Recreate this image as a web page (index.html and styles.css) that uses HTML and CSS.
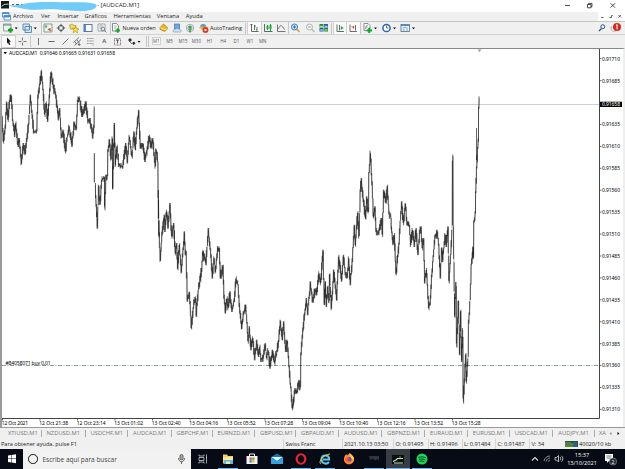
FILE: index.html
```html
<!DOCTYPE html>
<html lang="es">
<head>
    <meta charset="UTF-8">
    <meta name="viewport" content="width=device-width, initial-scale=1.0">
    <link rel="stylesheet" href="styles.css">
    <title>[AUDCAD,M1]</title>
</head>
<body>

<div class="screen">

    <header class="titlebar">
        <svg class="scribble" width="98" height="12" viewBox="0 0 98 12">
            <rect x="1" y="1" width="8" height="7.5" fill="#151b19"/>
            <path d="M1.500 6.500L4 4.500L8.500 4" stroke="#b9c4bd" fill="none"/>
            <path d="M12 4.500H14M16 4.500H19M21 4.500H24" stroke="#555" stroke-width="1"/>
            <path d="M8 4.500C14 7 22 4 30 2.800C42 1.300 62 2.500 80 2.300C90 2.300 97 3.500 96.500 6C96 9.500 88 11.700 76 11.100C62 10 54 9 43 9.500C34 10 28 10 22 8.500C16 7 10 7 8 4.500Z" fill="#70cbf8"/>
        </svg>
        <span class="title">- [AUDCAD,M1]</span>
        <svg class="window-buttons" width="62" height="12" viewBox="0 0 62 12" fill="none" stroke="#222" stroke-width=".8">
            <path d="M2 5.500H7M47.500 3.200L52 7.700M52 3.200L47.500 7.700"/>
            <path d="M24.500 4.500H28V7.800H24.500ZM25.500 4.500V3.400H29V6.700H28"/>
        </svg>
    </header>

    <nav class="menubar">
        <svg width="12" height="9" viewBox="0 0 12 9" fill="#fff" stroke="#4388c8" stroke-width=".9">
            <path d="M2.500 .8H9V5H2.500ZM4 3.500H10.500V8H4Z"/>
            <path d="M2.500 1.300H9M4 4.200H10.500" stroke-width="1.400"/>
        </svg>
        <span>Archivo</span>
        <span>Ver</span>
        <span>Insertar</span>
        <span>Gráficos</span>
        <span>Herramientas</span>
        <span>Ventana</span>
        <span>Ayuda</span>
        <svg class="child-buttons" width="27" height="9" viewBox="0 0 27 9" fill="none" stroke="#444" stroke-width=".8">
            <rect x="0" y="0" width="27" height="9" fill="#fff" stroke="none"/>
            <path d="M3 5.500H5.500M20.500 3L23 5.500M23 3L20.500 5.500"/>
            <path d="M11.500 5.500H13.500V3.500H14.500" stroke="#3d6b50" stroke-width="1"/>
        </svg>
    </nav>

    <div class="toolbar main-tools">
        <svg width="19" height="12" viewBox="0 0 19 12">
            <path d="M1.500 2H9V9H1.500Z" fill="#eef5ee" stroke="#77938a" stroke-width=".8"/>
            <path d="M1.500 3H9" stroke="#4f8c70"/>
            <path d="M6 8.200H11M8.500 5.700V10.700" stroke="#16a32b" stroke-width="2.200"/>
            <path d="M12.700 5.500H15.700L14.200 7.200Z"/>
        </svg>
        <svg width="19" height="12" viewBox="0 0 19 12">
            <path d="M2 2H8.500V8H2ZM4 4.500H10.500V10.500H4Z" fill="#d3e6f7" stroke="#5283ae" stroke-width=".9"/>
            <path d="M12.700 5.500H15.700L14.200 7.200Z"/>
        </svg>
        <svg class="sep" width="12" height="12" viewBox="0 0 12 12">
            <path d="M2 2H10V10H2Z" fill="#edf6ed" stroke="#708a80" stroke-width=".8"/>
            <path d="M4 3.500V6M3 4.500L4 3.500L5 4.500" stroke="#229b3b" fill="none"/>
            <path d="M6 7L9 9M8 6V9" stroke="#ce5439" stroke-width="1.200"/>
        </svg>
        <svg width="12" height="12" viewBox="0 0 12 12" fill="none" stroke="#46525b" stroke-width=".9">
            <circle cx="6" cy="6" r="2.700"/>
            <path d="M6 1.800V5M6 7V10.200M1.800 6H5M7 6H10.200"/>
        </svg>
        <svg width="12" height="12" viewBox="0 0 12 12" stroke="#a98719" stroke-width=".6">
            <path d="M1.500 3L4.500 2L5.500 3.500H8V7H2.500Z" fill="#f2d95c"/>
            <path d="M7.500 4.500L8.500 6.500L11 7L9 8.500L9.500 11L7.500 9.500L5 10.500L6 8.500L4.500 6.500H6.800Z" fill="#ffe33c"/>
        </svg>
        <svg width="12" height="12" viewBox="0 0 12 12">
            <rect x="2" y="2.500" width="8" height="7" fill="#fff" stroke="#4b6d9c" stroke-width=".9"/>
            <path d="M3 2.500V9.500" stroke="#3d74b8" stroke-width="1.600"/>
        </svg>
        <svg width="12" height="12" viewBox="0 0 12 12">
            <path d="M2 2H9V9H2Z" fill="#fff" stroke="#87919a" stroke-width=".8"/>
            <path d="M3 4H8M3 6H6M5 2V9" stroke="#95aaa0" stroke-width=".7"/>
            <circle cx="7" cy="7" r="1.800" fill="#dbe9f5" stroke="#666" stroke-width=".7"/>
            <path d="M8.500 8.500L10.500 10.500" stroke="#777"/>
        </svg>
        <span class="sep tool-label">
            <svg width="10" height="12" viewBox="0 0 10 12">
                <path d="M1.500 1.500H5.500L7.500 3.500V9H1.500Z" fill="#fff" stroke="#60766b" stroke-width=".8"/>
                <path d="M3 4H6M3 6H5" stroke="#777" stroke-width=".6"/>
                <path d="M4.500 8.500H9M6.700 6.200V10.800" stroke="#18a82e" stroke-width="1.900"/>
            </svg>
            Nueva orden
        </span>
        <svg width="12" height="12" viewBox="0 0 12 12">
            <path d="M2 5.500L5.500 2L10 6L7 9.500L2 7.500Z" fill="#edb72b" stroke="#a77814" stroke-width=".7"/>
            <path d="M2.500 5.800L7 7.800L9.500 6" fill="none" stroke="#fff1a8" stroke-width=".8"/>
        </svg>
        <svg width="12" height="12" viewBox="0 0 12 12">
            <rect x="3.500" y="2" width="5" height="5" fill="#67a9e1" stroke="#3977ad" stroke-width=".7"/>
            <path d="M2 9.500C2 7 4 7.500 5 7C7 6 8 7 8.500 7.500C11 7.500 10.500 10 9.500 10H2.500Z" fill="#d4e3f1" stroke="#7c9db9" stroke-width=".7"/>
        </svg>
        <svg width="12" height="12" viewBox="0 0 12 12" fill="none">
            <circle cx="6" cy="6" r="3.700" stroke="#a5afb2"/>
            <circle cx="6" cy="6" r="2" stroke="#8b9898"/>
            <path d="M6 5.500V10.500" stroke="#20a33a" stroke-width="1.500"/>
            <circle cx="6" cy="5" r="1.300" fill="#35a850"/>
        </svg>
        <span class="tool-label auto">
            <svg width="13" height="12" viewBox="0 0 13 12">
                <path d="M2 5.500L6 3L11 5.500L7 9Z" fill="#e5b536"/>
                <path d="M3 4.500C3 1 9 1 9.500 4.500Z" fill="#5796cb"/>
                <circle cx="8.500" cy="8" r="3" fill="#d93823"/>
                <rect x="7.500" y="7" width="2" height="2" fill="#fff"/>
            </svg>
            AutoTrading
        </span>
        <i class="grip"></i>
        <svg class="pressed" width="13" height="12" viewBox="0 0 13 12" fill="none" stroke="#476354" stroke-width=".9">
            <path d="M3.500 2V9.500H10.500M2.500 3L3.500 2L4.500 3M6.500 3V8M6.500 4H8M9 5V8.500M8 8H9"/>
        </svg>
        <svg width="13" height="12" viewBox="0 0 13 12" fill="none" stroke="#465d50" stroke-width=".9">
            <path d="M2.500 2V9.500H10.500"/>
            <path d="M5.500 3V8M8.500 2V9" stroke="#138934"/>
            <path d="M5.500 4V7M8.500 3V7" stroke="#1ba63d" stroke-width="2"/>
        </svg>
        <svg width="13" height="12" viewBox="0 0 13 12" fill="none" stroke="#60696a" stroke-width=".9">
            <path d="M2.500 2.500V9.500H10.500M3.500 7C5 2 7 3 9.500 7.500"/>
        </svg>
        <svg class="sep" width="13" height="12" viewBox="0 0 13 12">
            <path d="M7.500 7L10.500 10" stroke="#d5a928" stroke-width="1.700"/>
            <circle cx="5.500" cy="5" r="3" fill="#d6eaff" stroke="#3978bd"/>
            <path d="M4 5H7M5.500 3.500V6.500" stroke="#2869ab"/>
        </svg>
        <svg width="13" height="12" viewBox="0 0 13 12">
            <path d="M7.500 7L10.500 10" stroke="#bdb9aa" stroke-width="1.500"/>
            <circle cx="5.500" cy="5" r="3" fill="#f1f1f1" stroke="#b1b5ba"/>
            <path d="M4 5H7" stroke="#a3a7ab"/>
        </svg>
        <svg width="13" height="12" viewBox="0 0 13 12">
            <path d="M2.500 2H6.500V5.500H2.500ZM7 6H11V9.500H7Z" fill="#238b33"/>
            <path d="M7 2H11V5.500H7ZM2.500 6H6.500V9.500H2.500Z" fill="#2b5cb0"/>
            <path d="M3 4.300H6M7.500 4.300H10.500M3 8H6M7.500 8H10.500" stroke="#cce7d9"/>
        </svg>
        <i class="grip"></i>
        <svg class="pressed" width="13" height="12" viewBox="0 0 13 12" fill="none" stroke="#476354" stroke-width=".9">
            <path d="M3 2.500V9.500H10M5.500 3V8.500"/>
            <path d="M7 4.500L9.500 6L7 7.500Z" fill="#27a445" stroke="#27a445" stroke-width=".4"/>
        </svg>
        <svg class="pressed" width="13" height="12" viewBox="0 0 13 12" fill="none" stroke="#665b5b" stroke-width=".9">
            <path d="M3 2.500V9.500H10M8.500 3V8.500"/>
            <path d="M4.500 5H7.500M6.500 4V6.500" stroke="#bd4747"/>
        </svg>
        <svg class="sep" width="19" height="12" viewBox="0 0 19 12">
            <path d="M3 1.500H7L9 3.500V8.500H3Z" fill="#fff" stroke="#6d7771" stroke-width=".8"/>
            <path d="M4.500 7C5.500 3 5 4 7 3M4.500 5H6.500" fill="none" stroke="#555" stroke-width=".6"/>
            <path d="M5.500 8.500H11M8.200 5.800V11" stroke="#17a72c" stroke-width="2"/>
            <path d="M13 5.500H16L14.500 7.200Z"/>
        </svg>
        <svg width="19" height="12" viewBox="0 0 19 12">
            <circle cx="6.500" cy="6" r="3.600" fill="#fff" stroke="#2766ad" stroke-width="1.500"/>
            <path d="M6.500 3.500V6H8.500" fill="none" stroke="#444" stroke-width=".7"/>
            <path d="M13 5.500H16L14.500 7.200Z"/>
        </svg>
        <svg width="19" height="12" viewBox="0 0 19 12">
            <rect x="2" y="2.500" width="8.500" height="7" fill="#e9f3fa" stroke="#466f91" stroke-width=".8"/>
            <path d="M2 3.500H10.500" stroke="#4788bd"/>
            <path d="M3.500 6H5L6 5L7 6H9M3.500 8H6M7 8H9" stroke="#668c85" stroke-width=".7" fill="none"/>
            <path d="M13 5.500H16L14.500 7.200Z"/>
        </svg>
        <svg class="tool-right" width="28" height="12" viewBox="0 0 28 12">
            <path d="M4.500 6.500L2 9" stroke="#334e75" stroke-width="1.300"/>
            <circle cx="5.800" cy="4.700" r="2" fill="#dce8f5" stroke="#38598b" stroke-width="1"/>
            <path d="M14 6C14 9 16 10 19 9V5H14Z" fill="#eee" stroke="#aaa" stroke-width=".8"/>
            <circle cx="20" cy="5" r="4" fill="#cf2e1e"/>
            <path d="M20.100 2.500V7.500M19 3.500L20.100 2.700" stroke="#fff" stroke-width="1" fill="none"/>
        </svg>
    </div>

    <div class="toolbar draw-tools">
        <svg class="pressed" width="13" height="11" viewBox="0 0 13 11">
            <path d="M5 1.500L9 5.700H7.200L8.300 8.500L7 9L6 6.500L5 7.500Z" fill="#111"/>
        </svg>
        <svg width="13" height="11" viewBox="0 0 13 11" stroke="#555" stroke-width=".8">
            <path d="M6.500 1.500V4.500M6.500 6.500V9.500M2.500 5.500H5.500M7.500 5.500H10.500"/>
        </svg>
        <svg class="sep" width="13" height="11" viewBox="0 0 13 11" stroke="#555" stroke-width=".8">
            <path d="M7.500 2V9"/>
        </svg>
        <svg width="13" height="11" viewBox="0 0 13 11" stroke="#444" stroke-width=".8">
            <path d="M3.500 5.500H9.500"/>
        </svg>
        <svg width="13" height="11" viewBox="0 0 13 11" stroke="#555" stroke-width=".8">
            <path d="M3.500 8.500L9.500 2.500"/>
        </svg>
        <svg width="13" height="11" viewBox="0 0 13 11" stroke="#555" stroke-width=".8">
            <path d="M2.500 6.500L8 1.500M3.500 9.500L10 3.500M4 6L5.500 8M6 4L8 6.500M7 8.500H9.500M8 6.500V10"/>
        </svg>
        <svg width="13" height="11" viewBox="0 0 13 11" stroke="#777" stroke-width=".8" stroke-dasharray="1 .4">
            <path d="M3 2.500H10M3 5H10M3 7.500H8M9 7V9.500"/>
        </svg>
        <b class="letter">A</b>
        <svg width="13" height="11" viewBox="0 0 13 11" fill="none" stroke="#666" stroke-width=".8">
            <rect x="3.500" y="2.500" width="6" height="6.500" stroke-dasharray="1 .5"/>
            <path d="M5 4H8M6.500 4V7.500" stroke="#333"/>
        </svg>
        <svg width="20" height="11" viewBox="0 0 20 11">
            <path d="M3 4L5 2L7 4L5 6ZM7 7L9 5.500L10.500 7.500L8.500 9Z" fill="#333"/>
            <path d="M4 5L7 8" stroke="#555" stroke-width=".8"/>
            <path d="M12.500 5H15.500L14 6.700Z"/>
        </svg>
        <i class="grip"></i>
        <span class="pressed">M1</span>
        <span>M5</span>
        <span>M15</span>
        <span>M30</span>
        <span>H1</span>
        <span>H4</span>
        <span>D1</span>
        <span>W1</span>
        <span>MN</span>
        <i class="sep"></i>
    </div>

    <main class="chart">
        <svg id="chart" width="621" height="378" viewBox="2 49 621 378">
            <path d="M2 104.500H599" stroke="#c3c3c3" stroke-width=".8"/>
            <path d="M2 365.500H599" stroke="#5d8878" stroke-width=".8" stroke-dasharray="4 1.500 1 1.500"/>
            <path d="M477.500 49.500H481.500L479.500 52Z" fill="#999"/>
            <path d="M599.500 49V418.500H2" fill="none" stroke="#444" stroke-width="1"/>
            <path id="trace" fill="none" stroke="#666" stroke-width=".45"/>
            <path id="bars" fill="none" stroke="#000" stroke-width=".6"/>
            <path d="M3.500 52H7L5.200 54.300Z"/>
            <text x="9" y="55.300" textLength="106" xml:space="preserve">AUDCAD,M1  0.91646 0.91665 0.91631 0.91658</text>
            <text x="5.500" y="364.800" textLength="45">#84058071 buy 0.01</text>
            <g id="prices"></g>
            <g id="times"></g>
            <rect x="600" y="101.700" width="22" height="5.300"/>
            <text x="602" y="106.300" textLength="18" fill="#fff">0.91658</text>
        </svg>
    </main>

    <div class="tabs">
        <span>XTIUSD,M1</span>
        <span>NZDUSD,M1</span>
        <span>USDCHF,M1</span>
        <span>AUDCAD,M1</span>
        <span>GBPCHF,M1</span>
        <span>EURNZD,M1</span>
        <span>GBPUSD,M1</span>
        <span>GBPAUD,M1</span>
        <span>AUDUSD,M1</span>
        <span>GBPNZD,M1</span>
        <span>EURAUD,M1</span>
        <span>EURUSD,M1</span>
        <span>USDCAD,M1</span>
        <span>AUDJPY,M1</span>
        <span>XA</span>
        <svg width="16" height="8" viewBox="0 0 16 8">
            <path d="M2.500 2L.5 3.500L2.500 5Z" fill="#888"/>
            <path d="M8.500 2L10.500 3.500L8.500 5Z"/>
        </svg>
    </div>

    <footer class="status">
        <span>Para obtener ayuda, pulse F1</span>
        <span>Swiss Franc</span>
        <span>2021.10.13 03:50</span>
        <span>O: 0.91495</span>
        <span>H: 0.91496</span>
        <span>L: 0.91484</span>
        <span>C: 0.91487</span>
        <span>V: 34</span>
        <span class="traffic">
            <svg width="13" height="7" viewBox="0 0 13 7">
                <rect width="13" height="6" fill="#254e48"/>
                <path d="M1 1V6M3 1V6M5 1V6M7 2V6" stroke="#8cb33b"/>
                <path d="M9 1V6M11 1V6" stroke="#2d83a9"/>
            </svg>
            40020/10 kb
        </span>
    </footer>

    <div class="taskbar">
        <svg class="start" width="23" height="20" viewBox="0 0 23 20">
            <path d="M8 6.500L11.300 6V9.500H8ZM11.800 5.900L16 5.300V9.500H11.800ZM8 10H11.300V13.500L8 13ZM11.800 10H16V14.200L11.800 13.600Z" fill="#fff"/>
        </svg>
        <div class="search">
            <i class="cortana"></i>
            <span>Escribe aquí para buscar</span>
            <svg width="9" height="12" viewBox="0 0 9 12" fill="none" stroke="#444" stroke-width=".8">
                <rect x="3" y="1.500" width="3" height="5.500" rx="1.500" fill="#aaa"/>
                <path d="M1.500 5C1.500 10 7.500 10 7.500 5M4.500 8.800V11"/>
            </svg>
        </div>
        <svg width="24" height="20" viewBox="0 0 24 20" fill="none" stroke="#ccc" stroke-width=".8">
            <path d="M8 5.500V7H13V5.500M8 14.500V13H13V14.500M8 8.500H13V11.500H8ZM15.500 5.500V14.500M15 8.500H16"/>
        </svg>
        <div class="app open">
            <svg width="14" height="14" viewBox="0 0 14 14">
                <path d="M2 2.500H6L7 4H12V11.500H2Z" fill="#f4ce62"/>
                <path d="M3 6.500H12V12H3Z" fill="#66b9e5"/>
                <path d="M2 5H12V8H2Z" fill="#fae69d"/>
                <path d="M5 9.500H9V12H5Z" fill="#f7e6ac"/>
            </svg>
        </div>
        <div class="app">
            <svg width="14" height="14" viewBox="0 0 14 14">
                <path d="M4.500 4V2H9.500V4" fill="none" stroke="#eee"/>
                <path d="M1.500 4H12.500V12H1.500Z" fill="#f4f4f4"/>
                <path d="M4.500 5.500H6.800V7.800H4.500Z" fill="#dd4b35"/>
                <path d="M7.200 5.500H9.500V7.800H7.200Z" fill="#55a946"/>
                <path d="M4.500 8.200H6.800V10.500H4.500Z" fill="#318bd0"/>
                <path d="M7.200 8.200H9.500V10.500H7.200Z" fill="#ebb42e"/>
            </svg>
        </div>
        <div class="app">
            <svg width="14" height="14" viewBox="0 0 14 14">
                <path d="M1 5L7 1.500L13 5V12H1Z" fill="#1475ba"/>
                <path d="M1.500 5H12.500L7 9Z" fill="#e8f5fc"/>
                <path d="M1 5.500L7 9.500L13 5.500V12H1Z" fill="#39a0df"/>
            </svg>
        </div>
        <div class="app open">
            <svg width="14" height="14" viewBox="0 0 14 14">
                <ellipse cx="7" cy="7" rx="4.300" ry="4.700" fill="none" stroke="#ed2437" stroke-width="2.300"/>
                <ellipse cx="7" cy="7" rx="2.100" ry="4" fill="#080c15"/>
            </svg>
        </div>
        <div class="app open">
            <svg width="14" height="14" viewBox="0 0 14 14" fill="none">
                <path d="M11 10C8.500 13 3.500 11.500 3.500 7.500C3.500 2.500 11 2 11.200 7.500H5" stroke="#5cc5ef" stroke-width="2"/>
                <path d="M3 12C0 11 4 3 12 2" stroke="#f4c83e" stroke-width="1"/>
            </svg>
        </div>
        <div class="app">
            <svg width="14" height="14" viewBox="0 0 14 14">
                <circle cx="7" cy="7.500" r="5" fill="#f45c30"/>
                <path d="M2 7C2 4 4 3 4 2L5.500 4L7.500 1C10 3 13 5 11.800 9C9 13 4 13 2 8Z" fill="#ff9232"/>
                <path d="M7.500 1C9 3 13 5 11.500 8L9 6Z" fill="#ffd544"/>
                <circle cx="7" cy="7.500" r="2.500" fill="#7248b8"/>
                <path d="M3 5.500L7 6L5.500 8L8.500 9.500C5 12 3 9 3 6Z" fill="#f5622b"/>
            </svg>
        </div>
        <div class="app open">
            <svg width="14" height="14" viewBox="0 0 14 14">
                <path d="M2 4H12V9L10.500 7L8 8.500L6 6.500L3 8Z" fill="#2e373e"/>
            </svg>
        </div>
        <div class="app open active">
            <svg width="14" height="14" viewBox="0 0 14 14">
                <rect x="1" y="3" width="12" height="9" fill="#07120d"/>
                <path d="M2 9.500L5 8L6.500 6.500H12M3 11H12" stroke="#d5e0cd" stroke-width="1.100" fill="none"/>
                <path d="M8 5H10" stroke="#58a94e"/>
            </svg>
        </div>
        <div class="app open">
            <svg width="14" height="14" viewBox="0 0 14 14" fill="none" stroke="#0b311b" stroke-linecap="round">
                <circle cx="7" cy="7" r="5.500" fill="#1ed760" stroke="none"/>
                <path d="M3.800 5.300C6.500 4.500 8.500 4.800 10.500 5.800M4.200 7.300C6.500 6.700 8 7 9.800 7.800M4.600 9.200C6.500 8.800 7.500 9 9 9.700" stroke-width=".9"/>
            </svg>
        </div>
        <svg class="tray" width="36" height="20" viewBox="0 0 36 20" fill="none" stroke="#ddd" stroke-width=".8">
            <path d="M2 11.500L5 8.500L8 11.500" stroke-width="1.100"/>
            <path d="M14 12C14.500 9 17 7 20 7M16 12.500C16.500 10.500 18 9 20 9M18 12.500L20 11" stroke="#aaa"/>
            <path d="M25 8.500H26.500L28.500 6.500V13L26.500 11H25ZM30 8C31 9 31 10.500 30 11.500M31.500 6.800C33.300 8.500 33.300 11 31.500 12.800"/>
        </svg>
        <div class="clock">
            <span>15:37</span>
            <span>13/10/2021</span>
        </div>
        <svg class="notices" width="20" height="20" viewBox="0 0 20 20">
            <path d="M4 5H12V12H8L6 14V12H4Z" fill="#fff"/>
            <path d="M5.500 7H10.500M5.500 9H10" stroke="#333" stroke-width=".7"/>
            <circle cx="12" cy="12.500" r="3.600" fill="#222933" stroke="#aaa" stroke-width=".6"/>
            <text x="10.600" y="14.500" class="badge">2</text>
        </svg>
    </div>

</div>

<script src="chart.js"></script>
</body>
</html>
```
FILE: styles.css
```css
body {
    margin: 0;
    padding: 0;
    overflow: hidden;
    font-family: "Open Sans", "Noto Sans", sans-serif;
    background-color: #f0f0f0;
    color: #222;
}

svg {
    display: block;
    flex: none;
}

.screen {
    display: flex;
    flex-direction: column;
    width: 625px;
    height: 469px;
}

/* title and menu */

.titlebar {
    display: flex;
    height: 12px;
    background-color: #fff;
    font-size: 6px;
    line-height: 11px;
}

.title {
    margin-left: -1px;
    white-space: nowrap;
}

.window-buttons {
    margin-left: auto;
}

.menubar {
    display: grid;
    grid-template-columns: 13px 28px 16.500px 27px 29px 43.300px 29px 30px 1fr;
    height: 9px;
    border-bottom: 1px solid #c6c6c6;
    font-size: 5.800px;
    line-height: 8.500px;
}

.child-buttons {
    justify-self: end;
}

/* toolbars */

.toolbar {
    display: grid;
    align-items: center;
    justify-items: center;
    box-sizing: border-box;
}

.main-tools {
    grid-template-columns: 18.500px 20.500px 13.300px 13.300px 13.300px 13.300px 15.300px 48.500px 13px 13px 13px 48px 3px 13.500px 13.500px 13.500px 15px 13.500px 14px 3px 13.300px 13.300px 19px 19px 19px 1fr;
    height: 12px;
    padding-left: 2px;
}

.draw-tools {
    grid-template-columns: 13.500px 13.500px 16px 13.500px 13px 12.500px 13.500px 13.500px 13px 22px 3.500px 13.400px 13.400px 13.400px 13.400px 13.400px 13.400px 13.400px 13.400px 12px 1px;
    height: 14px;
    padding-left: 2px;
    padding-bottom: 1px;
    border-top: 1px solid #d2d2d2;
    font-size: 4.500px;
    color: #555;
}

.sep {
    box-shadow: -1px 0 0 #c8c8c8;
}

i.sep {
    height: 11px;
}

.pressed {
    background-color: #fafafa;
    outline: .5px solid #d0d0d0;
}

.grip {
    width: 1px;
    height: 11px;
    border-left: 1px solid #c4c4c4;
    border-right: 1px solid #c4c4c4;
}

.tool-label {
    display: flex;
    align-items: center;
    justify-self: start;
    font-size: 5.500px;
    white-space: nowrap;
    gap: 1px;
    margin-left: 2px;
}

.tool-label.auto {
    font-size: 5.600px;
    gap: 0;
    margin-left: 0;
}

.tool-right {
    justify-self: end;
}

.letter {
    font-size: 6px;
    font-weight: 600;
}

/* chart */

.chart {
    height: 378px;
    border-top: 1px solid #888;
    border-left: 2px solid #999;
    border-right: 2px solid #eee;
    background-color: #fff;
}

.chart text {
    font-family: "Noto Sans", sans-serif;
    font-size: 5px;
}

/* chart tabs */

.tabs {
    display: grid;
    grid-template-columns: 41.500px 44px 42.500px 43.500px 41px 42.500px 41px 43px 43px 43px 42.700px 42px 43.600px 41.700px 14px 16px;
    align-items: center;
    height: 12px;
    border-top: 1px solid #999;
    box-sizing: border-box;
    font-size: 5.800px;
    line-height: 7px;
    color: #777;
}

.tabs span {
    padding-left: 5px;
    border-right: 1px solid #aaa;
    white-space: nowrap;
}

.tabs span:first-child {
    padding-left: 8px;
}

.tabs span:nth-child(15) {
    padding-left: 4px;
    border: none;
}

/* status bar */

.status {
    display: grid;
    grid-template-columns: 284px 58.500px 51.500px 34.500px 34px 33.500px 34px 33px 1fr;
    height: 10px;
    font-size: 5.600px;
    line-height: 10.500px;
}

.status span {
    padding-left: 1.500px;
    box-shadow: -1px 0 0 #d4d4d4;
    white-space: nowrap;
}

.status span:first-child {
    padding-left: 1px;
}

.status .traffic {
    display: flex;
    align-items: center;
    gap: 1.500px;
    box-shadow: none;
}

/* taskbar */

.taskbar {
    display: flex;
    height: 20px;
    background-color: #070b15;
    color: #fff;
}

.search {
    display: flex;
    align-items: center;
    box-sizing: border-box;
    width: 168px;
    padding: 0 5px;
    background-color: #f2f2f2;
    color: #444;
    font-size: 6.500px;
}

.search svg {
    margin-left: auto;
}

.cortana {
    width: 7.500px;
    height: 7.500px;
    margin-right: 5px;
    border: 1.500px solid #111;
    border-radius: 50%;
}

.app {
    display: flex;
    align-items: center;
    justify-content: center;
    box-sizing: border-box;
    width: 24.250px;
    padding: 0 2px;
}

.start + .search + svg + .app {
    margin-left: 1px;
}

.open {
    background: linear-gradient(#69b5ec, #69b5ec) center bottom / 20px 1.200px no-repeat;
}

.active {
    background-color: #383d45;
    background-size: 100% 1.200px;
}

.tray {
    margin-left: auto;
}

.clock {
    display: flex;
    flex-direction: column;
    justify-content: center;
    width: 32px;
    font-size: 5.600px;
    line-height: 8.500px;
    text-align: center;
}

.notices {
    margin-left: 3px;
    margin-right: 4px;
}

.badge {
    fill: #fff;
    font-size: 5px;
}
```
FILE: chart.js
```js
// price swings, three units per pixel, each part with its own origin
const parts = [
    { x: 0, y: 60, points: [
        [6,165],[10,245],[16,200],[20,130],[24,180],[29,120],[34,110],[38,180],[44,225],[47,190],[53,255],[58,240],[64,310],[70,255],[76,280],[80,240],[86,190],[91,110],[97,170],[101,215],[110,215],[114,110],[119,70],[124,35],[129,85],[134,165],[138,130],[143,180],[148,110],[153,40],[160,80],[168,110],[175,175],[179,150],[184,230],[190,215],[196,275],[202,230],[207,200],[216,255],[222,190],[229,205],[233,125],[238,115],[247,165],[258,130],[264,185],[270,180],[278,230],[282,200],[283,145]
    ] },
    { x: 0, y: 60, points: [[283,285],[283,370]] },
    { x: 0, y: 60, points: [
        [286,375],[287,410],[292,500],[296,380],[300,435],[305,360],[313,355],[314,445],[318,350],[322,355],[324,270],[328,240],[333,300],[337,235],[338,390],[343,195],[346,315],[351,260],[356,315],[368,320],[377,255],[382,305],[388,230],[396,290],[402,220],[406,270],[411,200],[416,155],[421,260],[428,255],[435,300],[442,265],[448,230],[453,260],[458,240],[466,320],[468,270],[473,300],[475,420],[478,535]
    ] },
    { x: 150, y: 170, points: [
        [25,60],[25,150],[31,270],[36,190],[43,140],[45,180],[50,125],[54,170],[60,105],[65,200],[71,165],[76,250],[80,225],[83,295],[88,225],[94,305],[103,190],[106,250],[108,245],[112,390],[118,365],[124,475],[130,410],[137,385],[139,435],[145,360],[155,300],[158,245],[168,280],[175,180],[181,240],[187,320],[192,265],[196,305],[203,235],[208,240],[211,320],[219,290],[222,380],[226,425],[231,385],[234,415],[240,370],[246,420],[253,390],[258,325],[264,345],[268,405],[275,475],[280,430],[287,410],[291,460],[294,515],[298,475],[303,535],[308,505],[314,565],[320,515],[326,555],[329,530],[333,570],[340,560],[346,525],[350,565],[354,540],[360,590],[367,545],[374,580],[381,540],[386,510],[391,455],[397,510],[401,460],[407,540],[412,515],[417,590],[421,640],[424,665]
    ] },
    { x: 290, y: 140, points: [
        [3,760],[8,805],[15,750],[22,755],[25,725],[31,745],[33,640],[37,590],[44,520],[49,480],[53,520],[61,430],[69,485],[75,450],[80,460],[87,400],[92,430],[99,335],[103,490],[106,430],[109,495],[113,440],[117,490],[119,405],[124,505],[131,395],[136,440],[140,480],[146,350],[155,420],[160,350],[166,400],[172,410],[176,355],[181,430],[187,360],[193,260],[196,315],[203,220],[207,290],[211,150],[214,120],[220,180],[227,235],[230,175],[235,215],[237,100],[241,38],[246,130],[250,230],[255,205],[258,270],[266,280],[275,240],[277,285],[281,155],[288,185],[292,140],[297,220],[303,230],[304,265],[309,310],[313,285],[318,400],[327,310],[331,240],[335,190],[340,250],[346,190],[351,250],[358,255],[362,315],[367,270],[373,315],[378,270],[384,340],[389,275],[393,265],[397,325],[401,300],[404,425],[409,390],[412,430],[416,505],[420,490]
    ] },
    { x: 430, y: 225, points: [
        [0,240],[5,155],[10,90],[15,35],[22,20],[26,60],[31,155],[35,70],[38,105],[45,30],[49,60],[54,10],[57,170],[62,90],[66,20],[68,-212],[70,10],[73,200],[74,275],[78,170],[80,365],[85,225],[89,385],[92,260],[95,405],[98,315],[100,530],[107,390],[109,470],[114,400],[116,290],[120,230],[124,120],[129,70],[130,100],[132,-10],[136,-35],[137,-95],[140,-175],[143,-230],[145,-255],[146,-355],[148,-380]
    ] }
];

let seed = 7;
function noise() {
    seed = (seed * 16807) % 2147483647;
    return seed / 2147483647;
}

let trace = "";
let bars = "";

parts.forEach(part => {
    const points = part.points.map(p => [part.x + p[0] / 3, part.y + p[1] / 3]);
    trace += "M" + points.map(p => p[0].toFixed(2) + " " + p[1].toFixed(2)).join("L");

    for (let i = 1; i < points.length; i++) {
        const [x1, y1] = points[i - 1];
        const [x2, y2] = points[i];
        const count = Math.max(1, Math.round((x2 - x1) / 0.6));
        const top = Math.min(y1, y2);
        const bottom = Math.max(y1, y2);
        for (let n = 0; n < count; n++) {
            const t = (n + 0.5) / count;
            const x = x1 + (x2 - x1) * t;
            const y = y1 + (y2 - y1) * t;
            const half = (bottom - top) / count / 2;
            const from = Math.max(top - 2, y - half * 0.8 - noise() * 6);
            const to = Math.min(bottom + 2, y + half * 0.8 + noise() * 6);
            bars += `M${x.toFixed(2)} ${from.toFixed(2)}V${to.toFixed(2)}`;
        }
    }
});

// single tick that stands apart from the swings
bars += "M476.500 128V160";

document.getElementById("trace").setAttribute("d", trace);
document.getElementById("bars").setAttribute("d", bars);

let prices = "";
for (let i = 0; i < 17; i++) {
    const y = 58.7 + i * 21.92;
    const price = (0.9171 - i * 0.00025).toFixed(5);
    prices += `<path d="M600 ${y}H601.500" stroke="#444" stroke-width=".8"/>`;
    if (i !== 2) {
        prices += `<text x="602" y="${y + 1.9}" textLength="18">${price}</text>`;
    }
}
document.getElementById("prices").innerHTML = prices;

const times = ["12 Oct 2021", "12 Oct 21:38", "12 Oct 23:14", "13 Oct 01:02", "13 Oct 02:40", "13 Oct 04:16", "13 Oct 05:52", "13 Oct 07:28", "13 Oct 09:04", "13 Oct 10:40", "13 Oct 12:16", "13 Oct 13:52", "13 Oct 15:28"];
document.getElementById("times").innerHTML = times.map((time, i) => {
    const x = 2 + i * 37.5;
    return `<path d="M${x + 0.5} 418V420.500" stroke="#444" stroke-width=".8"/>
        <text x="${x - 0.3}" y="424.500" textLength="${i ? 29 : 26.5}">${time}</text>`;
}).join("");
```
